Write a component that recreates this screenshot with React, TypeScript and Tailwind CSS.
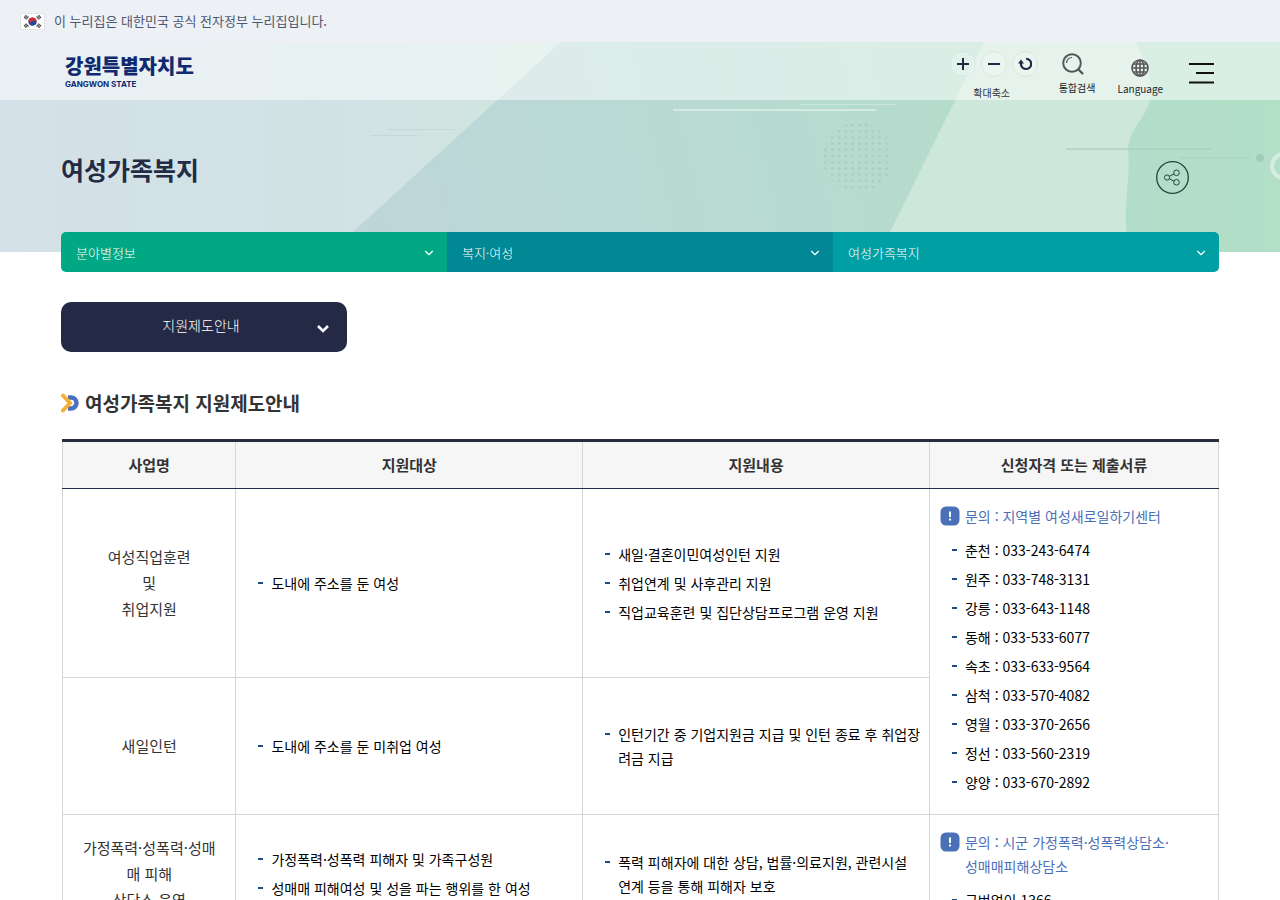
import React from "react";
import { ChevronDown } from "lucide-react";

interface SupportProgram {
  name: string[];
  targets: string[];
  contents: string[];
  rowClass: string;
  contact?: {
    title: string[];
    items: string[];
    rowSpan: number;
  };
}

const breadcrumbs = [
  { label: "분야별정보", color: "bg-[#00a884]" },
  { label: "복지·여성", color: "bg-[#008994]" },
  { label: "여성가족복지", color: "bg-[#009fa4]" },
];

const columns = [
  { label: "사업명", width: "w-[15%]" },
  { label: "지원대상", width: "w-[30%]" },
  { label: "지원내용", width: "w-[30%]" },
  { label: "신청자격 또는 제출서류", width: "w-[25%]" },
];

const programs: SupportProgram[] = [
  {
    name: ["여성직업훈련", "및", "취업지원"],
    targets: ["도내에 주소를 둔 여성"],
    contents: [
      "새일·결혼이민여성인턴 지원",
      "취업연계 및 사후관리 지원",
      "직업교육훈련 및 집단상담프로그램 운영 지원",
    ],
    rowClass: "h-[189px]",
    contact: {
      title: ["문의 : 지역별 여성새로일하기센터"],
      items: [
        "춘천 : 033-243-6474",
        "원주 : 033-748-3131",
        "강릉 : 033-643-1148",
        "동해 : 033-533-6077",
        "속초 : 033-633-9564",
        "삼척 : 033-570-4082",
        "영월 : 033-370-2656",
        "정선 : 033-560-2319",
        "양양 : 033-670-2892",
      ],
      rowSpan: 2,
    },
  },
  {
    name: ["새일인턴"],
    targets: ["도내에 주소를 둔 미취업 여성"],
    contents: ["인턴기간 중 기업지원금 지급 및 인턴 종료 후 취업장려금 지급"],
    rowClass: "h-[137px]",
  },
  {
    name: ["가정폭력·성폭력·성매매 피해", "상담소 운영"],
    targets: [
      "가정폭력·성폭력 피해자 및 가족구성원",
      "성매매 피해여성 및 성을 파는 행위를 한 여성",
    ],
    contents: [
      "폭력 피해자에 대한 상담, 법률·의료지원, 관련시설 연계 등을 통해 피해자 보호",
    ],
    rowClass: "h-[117px]",
    contact: {
      title: ["문의 : 시군 가정폭력·성폭력상담소·", "성매매피해상담소"],
      items: ["국번없이 1366"],
      rowSpan: 1,
    },
  },
];

function KoreanFlag() {
  return (
    <svg viewBox="0 0 25 17" className="h-[17px] w-[25px]" aria-hidden="true">
      <rect x="0.5" y="0.5" width="24" height="16" fill="#fff" stroke="#e2e4e8" />
      <g transform="rotate(28 12.5 8.5)">
        <path d="M8.3 8.5a4.2 4.2 0 0 1 8.4 0z" fill="#cd2e3a" />
        <path d="M8.3 8.5a4.2 4.2 0 0 0 8.4 0z" fill="#1b4a9c" />
        <circle cx="10.4" cy="8.5" r="2.1" fill="#cd2e3a" />
        <circle cx="14.6" cy="8.5" r="2.1" fill="#1b4a9c" />
      </g>
      <g stroke="#222" strokeWidth="1">
        <path d="M4 5l2.2-3M5.1 5.8l2.2-3M6.2 6.5l2.2-3" />
        <path d="M18.8 2l2.2 3M17.7 2.8l2.2 3M16.6 3.5l2.2 3" />
        <path d="M4 12l2.2 3M5.1 11.2l2.2 3M6.2 10.5l2.2 3" />
        <path d="M18.8 15l2.2-3M17.7 14.2l2.2-3M16.6 13.5l2.2-3" />
      </g>
    </svg>
  );
}

function HeroBackground() {
  return (
    <svg
      viewBox="0 0 1280 210"
      preserveAspectRatio="xMidYMid slice"
      className="absolute inset-0 h-full w-full"
      aria-hidden="true"
    >
      <defs>
        <linearGradient id="sky" x1="0" x2="560" y1="0" y2="0" gradientUnits="userSpaceOnUse">
          <stop offset="0" stopColor="#d4e1e8" />
          <stop offset="0.55" stopColor="#d1e2e5" />
          <stop offset="1" stopColor="#d0e5de" />
        </linearGradient>
        <linearGradient id="mid" x1="340" x2="960" y1="210" y2="60" gradientUnits="userSpaceOnUse">
          <stop offset="0" stopColor="#bfd5d9" />
          <stop offset="0.4" stopColor="#bad9d5" />
          <stop offset="1" stopColor="#b4dccc" />
        </linearGradient>
        <linearGradient id="right" x1="1120" x2="1280" y1="0" y2="0" gradientUnits="userSpaceOnUse">
          <stop offset="0" stopColor="#b3ddcb" />
          <stop offset="1" stopColor="#b2dfc6" />
        </linearGradient>
        <pattern id="dots" x="822" y="80" width="6.8" height="6.2" patternUnits="userSpaceOnUse">
          <circle cx="3.4" cy="3.1" r="1.1" fill="#9fc9bd" />
        </pattern>
      </defs>
      <rect width="1280" height="210" fill="url(#sky)" />
      <path d="M561 0H1280V210H331z" fill="url(#mid)" />
      <path d="M984 0H1280V210H880z" fill="#cde7db" />
      <path
        d="M1136 0C1141 15 1150 28 1151 48C1151 76 1130 80 1128 108C1131 140 1122 160 1128 210H1280V0z"
        fill="url(#right)"
      />
      <circle cx="858" cy="115" r="35" fill="url(#dots)" />
      <path d="M673 68H876" stroke="#d5eae2" strokeWidth="2" />
      <path d="M800 62.500H896" stroke="#cbe5dc" />
      <path d="M388 87.500H454M370 93.500H418" stroke="#c3d9d9" />
      <path d="M1066 107H1212" stroke="#abcfc0" strokeWidth="2" opacity="0.7" />
      <path d="M1180 116H1250" stroke="#a5d1bd" strokeWidth="1" />
      <circle cx="1260" cy="116" r="4" fill="#9fcdb8" />
      <circle cx="1284" cy="124" r="12" fill="none" stroke="#d5eee0" strokeWidth="4" />
    </svg>
  );
}

function Logo() {
  return (
    <a href="#" className="flex flex-col pl-1 text-[#10296f]">
      <span className="text-[20px] font-black leading-[26px]">강원특별자치도</span>
      <span className="font-['Inter',sans-serif] text-[8px] font-bold leading-[10px]">
        GANGWON STATE
      </span>
    </a>
  );
}

function ZoomControls() {
  const buttonClass =
    "flex size-[26px] items-center justify-center rounded-full border border-[#d7e8e1] bg-white/20 text-[#1f2945]";

  return (
    <div className="flex flex-col items-center pt-[9px]">
      <div className="flex gap-[5px]">
        <button type="button" aria-label="확대" className={buttonClass}>
          <svg viewBox="0 0 12 12" className="size-3" stroke="currentColor" strokeWidth="2">
            <path d="M0 6h12M6 0v12" />
          </svg>
        </button>
        <button type="button" aria-label="축소" className={buttonClass}>
          <svg viewBox="0 0 12 12" className="size-3" stroke="currentColor" strokeWidth="2">
            <path d="M0 6h12" />
          </svg>
        </button>
        <button type="button" aria-label="초기화" className={buttonClass}>
          <svg viewBox="0 0 14 14" className="size-3.5" fill="none">
            <path d="M8.200 1.800A5.100 5.100 0 1 1 3 7.500V5.500" stroke="currentColor" strokeWidth="2.200" />
            <path d="M0 6.500L3 2.500L6 6.500z" fill="currentColor" />
          </svg>
        </button>
      </div>
      <span className="mt-[7px] pr-1 text-[10px] leading-[18px] text-[#333]">확대축소</span>
    </div>
  );
}

function SiteHeader() {
  return (
    <header className="relative h-[58px] bg-white/50">
      <div className="mx-auto flex w-full max-w-[1158px] items-start justify-between">
        <div className="pt-[11px]">
          <Logo />
        </div>
        <div className="flex items-start">
          <ZoomControls />
          <button
            type="button"
            className="ml-[21px] flex flex-col items-start pt-[11px] text-[10px] leading-[18px] text-[#222]"
          >
            <svg viewBox="0 0 22 22" className="ml-[3px] size-[22px]" fill="none" stroke="#555" strokeWidth="2">
              <circle cx="10" cy="10" r="8.800" />
              <path d="M16.500 16.500L21 21" strokeWidth="2.400" />
              <path d="M4.500 10A5.500 5.500 0 0 1 10 4.500" strokeWidth="1.200" />
            </svg>
            <span className="mt-1">통합검색</span>
          </button>
          <button
            type="button"
            className="ml-[22px] flex flex-col items-center pt-[17px] text-[10px] leading-[18px] text-[#222]"
          >
            <svg viewBox="0 0 18 18" className="size-[18px]" fill="none" stroke="#575757" strokeWidth="1.600">
              <circle cx="9" cy="9" r="8" />
              <ellipse cx="9" cy="9" rx="4" ry="8" />
              <path d="M9 1v16M1 9h16M2.500 5h13M2.500 13h13" />
            </svg>
            <span className="mt-[3px]">Language</span>
          </button>
          <button type="button" aria-label="전체메뉴" className="ml-[26px] mr-[5px] mt-5">
            <svg viewBox="0 0 25 22" className="h-[22px] w-[25px]" stroke="#111" strokeWidth="2">
              <path d="M0 2h25M7 11h18M0 20.500h25" />
            </svg>
          </button>
        </div>
      </div>
    </header>
  );
}

function ShareButton() {
  return (
    <button type="button" aria-label="공유하기" className="mr-[30px] mt-[14px]">
      <svg viewBox="0 0 33 33" className="size-[33px]" fill="none" stroke="#24463f">
        <circle cx="16.500" cy="16.500" r="15.800" strokeWidth="1.300" />
        <circle cx="11" cy="16.500" r="2.600" />
        <circle cx="20.500" cy="11.800" r="2.800" />
        <circle cx="20.500" cy="21.300" r="2.800" />
        <path d="M13.300 15.300L18 13M13.300 17.700L18 20.200" />
      </svg>
    </button>
  );
}

function DashList({ items }: { items: string[] }) {
  return (
    <ul className="space-y-[5px] text-left text-[14px] leading-[24px] text-black">
      {items.map((item) => (
        <li key={item} className="flex break-all">
          <span className="mr-2 mt-[11px] h-[2px] w-[5px] shrink-0 bg-[#1d4e7c]" />
          <span>{item}</span>
        </li>
      ))}
    </ul>
  );
}

function ContactTitle({ lines }: { lines: string[] }) {
  return (
    <p className="mb-[10px] flex gap-[5px] text-left text-[14px] leading-[24px] text-[#4a70b8]">
      <svg viewBox="0 0 20 20" className="mt-[2px] size-5 shrink-0" aria-hidden="true">
        <rect x="0.500" y="0.500" width="19" height="19" rx="5.500" fill="#4a70b8" />
        <path d="M10 5.500v5.500M10 12.500v2" stroke="#fff" strokeWidth="2" />
      </svg>
      <span>
        {lines.map((line) => (
          <span key={line} className="block">
            {line}
          </span>
        ))}
      </span>
    </p>
  );
}

function SupportTable() {
  return (
    <table className="ml-px w-[calc(100%-1px)] table-fixed border-collapse border-t-[3px] border-[#252d3f]">
      <thead>
        <tr className="h-12 bg-[#f6f6f7]">
          {columns.map((column) => (
            <th
              key={column.label}
              scope="col"
              className={`${column.width} border-x border-b border-x-[#d6d6d6] border-b-[#252d4f] text-[15px] font-bold text-[#333]`}
            >
              {column.label}
            </th>
          ))}
        </tr>
      </thead>
      <tbody>
        {programs.map((program) => (
          <tr key={program.name[0]} className={program.rowClass}>
            <td className="break-all border border-[#d6d6d6] px-4 text-center text-[15px] leading-[26px] text-[#333]">
              {program.name.map((line) => (
                <span key={line} className="block">
                  {line}
                </span>
              ))}
            </td>
            <td className="border border-[#d6d6d6] pl-[22px] pr-[7px]">
              <DashList items={program.targets} />
            </td>
            <td className="border border-[#d6d6d6] pl-[22px] pr-[7px]">
              <DashList items={program.contents} />
            </td>
            {program.contact && (
              <td
                rowSpan={program.contact.rowSpan}
                className="border border-[#d6d6d6] pb-5 pl-[10px] pr-3 pt-[15px] align-top"
              >
                <ContactTitle lines={program.contact.title} />
                <div className="pl-3">
                  <DashList items={program.contact.items} />
                </div>
              </td>
            )}
          </tr>
        ))}
      </tbody>
    </table>
  );
}

export default function App() {
  return (
    <div
      lang="ko"
      className="min-h-screen overflow-x-hidden bg-white font-['Noto_Sans_CJK_KR',sans-serif]"
    >
      <div className="flex h-[42px] items-center gap-[9px] bg-[#edf0f5] px-5 text-[13px] text-[#4c5870]">
        <KoreanFlag />
        <span>이 누리집은 대한민국 공식 전자정부 누리집입니다.</span>
      </div>

      <section className="relative h-[210px]">
        <HeroBackground />
        <SiteHeader />
        <div className="relative mx-auto flex w-full max-w-[1158px] items-start justify-between pt-[47px]">
          <h1 className="text-[25px] font-bold leading-[44px] text-[#242b45]">여성가족복지</h1>
          <ShareButton />
        </div>
      </section>

      <main className="relative mx-auto -mt-5 w-full max-w-[1158px]">
        <nav className="flex overflow-hidden rounded-[5px]" aria-label="현재 위치">
          {breadcrumbs.map((crumb) => (
            <button
              key={crumb.label}
              type="button"
              className={`${crumb.color} flex h-10 flex-1 items-center justify-between pl-[15px] pr-[11px] pt-px text-[13px] font-light text-white`}
            >
              {crumb.label}
              <ChevronDown size={14} strokeWidth={2} />
            </button>
          ))}
        </nav>

        <button
          type="button"
          className="mt-[30px] flex h-[50px] w-[286px] items-center rounded-[10px] bg-[#242a45] pl-6 pr-[18px] text-[14px] font-light text-white"
        >
          <span className="flex-1 pb-[3px]">지원제도안내</span>
          <svg viewBox="0 0 12 8" className="mt-1 h-2 w-3" fill="none" aria-hidden="true">
            <path d="M1 1L6 6L11 1" stroke="#fff" strokeWidth="2.5" />
          </svg>
        </button>

        <h2 className="mb-[21px] mt-[36px] flex items-center gap-[5px] text-[19px] font-bold leading-[30px] text-[#333]">
          <svg viewBox="0 0 19 20" className="h-5 w-[19px]" fill="none" aria-hidden="true">
            <path d="M7 4.500H10A5.500 5.500 0 0 1 10 15.500H7" stroke="#4a70c0" strokeWidth="4.500" />
            <path d="M2 2.500L9 10L2 17.500" stroke="#f2b035" strokeWidth="4" strokeLinecap="round" />
          </svg>
          여성가족복지 지원제도안내
        </h2>

        <SupportTable />
      </main>
    </div>
  );
}
